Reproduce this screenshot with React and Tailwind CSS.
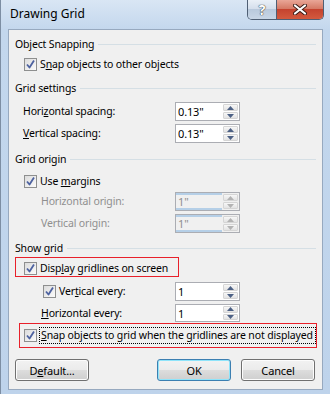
import React from 'react'

const font = "font-['Noto_Sans',sans-serif]"

function Check({ checked = true }) {
  return (
    <span className="flex h-[13px] w-[13px] shrink-0 items-center justify-center border border-[#8e8f8f] bg-gradient-to-br from-[#dcdcdc] to-[#fbfbfb]">
      {checked && (
        <svg width="11" height="11" viewBox="0 0 11 11">
          <path d="M2 5.5 L4.5 8.5 L9 1.5" fill="none" stroke="#4d62a0" strokeWidth="1.8" strokeLinejoin="round" />
        </svg>
      )}
    </span>
  )
}

function Header({ label }) {
  return (
    <div className="flex h-[16px] items-center pl-[6px] pr-[6px]">
      <span className="text-black">{label}</span>
      <span className="ml-[4px] h-px flex-1 bg-[#d5dfe5]" />
    </div>
  )
}

function Arrow({ up, disabled }) {
  const c = disabled ? '#b3b3b3' : '#4d6185'
  return (
    <svg width="7" height="4" viewBox="0 0 7 4">
      <path d={up ? 'M0 4 L3.5 0 L7 4 Z' : 'M0 0 L3.5 4 L7 0 Z'} fill={c} />
    </svg>
  )
}

function Spin({ value, disabled, h = 'h-[19px]' }) {
  return (
    <div className={`flex ${h} w-[65px] border border-[#abadb3] ${disabled ? 'bg-[#f0f0f0]' : 'bg-white'}`}>
      <div
        className={`flex flex-1 items-center pl-[2px] text-[11px] ${
          disabled ? 'border-y-2 border-[#b5cfe7] text-[#8f8f8f]' : 'text-black'
        }`}
      >
        {value}
      </div>
      <div className="flex w-[17px] flex-col gap-px p-px">
        <div className="flex flex-1 items-center justify-center rounded-[1px] border border-[#d5d5d5] bg-gradient-to-b from-[#f7f7f7] to-[#e3e3e3]">
          <Arrow up disabled={disabled} />
        </div>
        <div className="flex flex-1 items-center justify-center rounded-[1px] border border-[#d5d5d5] bg-gradient-to-b from-[#f7f7f7] to-[#e3e3e3]">
          <Arrow disabled={disabled} />
        </div>
      </div>
    </div>
  )
}

function Btn({ children, primary }) {
  return (
    <button
      className={`flex h-[22px] w-[74px] items-center justify-center rounded-[3px] border bg-[linear-gradient(#f2f2f2,#ebebeb_50%,#dddddd_50%,#cfcfcf)] text-[11px] text-black ${
        primary ? 'border-[#3c7fb1] shadow-[inset_0_0_0_1px_#8fe4fa]' : 'border-[#707070] shadow-[inset_0_0_0_1px_#fcfcfc]'
      }`}
    >
      {children}
    </button>
  )
}

export default function App() {
  return (
    <div className={`${font} relative h-[394px] w-[330px] overflow-hidden whitespace-nowrap border-l border-[#7d8ea3] bg-[linear-gradient(#d9e6f4,#c3d7ed_30px,#bed3eb)] text-[10.5px] leading-none tracking-[-0.15px] text-black`}>
      {/* title bar */}
      <div className="flex h-[29px] items-start justify-between pr-[6px]">
        <div className="pl-[9px] pt-[8px] text-[12px] tracking-normal text-black">Drawing Grid</div>
        <div className="flex h-[20px] overflow-hidden rounded-b-[5px] border border-t-0 border-[#4f5f74]">
          <div className="flex w-[29px] items-center justify-center border-r border-[#4f5f74] bg-[linear-gradient(#eaf0f7,#d5dfec_45%,#b9c9dc_50%,#c8d6e6)]">
            <span className="text-[14px] font-bold text-white [text-shadow:0_0_1px_#222,0_0_1px_#222]">?</span>
          </div>
          <div className="flex w-[46px] items-center justify-center bg-[linear-gradient(#e9a697,#d57a66_45%,#c5432f_50%,#d35a3e)]">
            <svg width="14" height="11" viewBox="0 0 14 11">
              <path d="M2 1.5 L12 9.5 M12 1.5 L2 9.5" stroke="#3b1c16" strokeWidth="4" strokeLinecap="round" />
              <path d="M2 1.5 L12 9.5 M12 1.5 L2 9.5" stroke="#fff" strokeWidth="2.2" strokeLinecap="round" />
            </svg>
          </div>
        </div>
      </div>

      {/* client area */}
      <div className="ml-[7px] flex h-[361px] w-[315px] flex-col border border-[#97a9bf] bg-[#f0f0f0]">
        <div className="mt-[6px]">
          <Header label="Object Snapping" />
        </div>
        <div className="flex h-[24px] items-center pl-[15px]">
          <Check />
          <span className="ml-[3px]">
            S<u>n</u>ap objects to other objects
          </span>
        </div>
        <div className="flex h-[24px] items-center">
          <div className="w-full">
            <Header label="Grid settings" />
          </div>
        </div>
        <div className="mt-[2px] flex items-center justify-between pl-[14px] pr-[82px]">
          <span>
            Hori<u>z</u>ontal spacing:
          </span>
          <Spin value={'0.13"'} />
        </div>
        <div className="mt-[3px] flex items-center justify-between pl-[14px] pr-[82px]">
          <span>
            <u>V</u>ertical spacing:
          </span>
          <Spin value={'0.13"'} />
        </div>
        <div className="mt-[8px]">
          <Header label="Grid origin" />
        </div>
        <div className="mt-[8px] flex h-[13px] items-center pl-[15px]">
          <Check />
          <span className="ml-[3px]">
            Use <u>m</u>argins
          </span>
        </div>
        <div className="mt-[4px] flex items-center justify-between pl-[32px] pr-[82px] text-[#8f8f8f]">
          <span>Horizontal origin:</span>
          <Spin value={'1"'} disabled />
        </div>
        <div className="mt-[3px] flex items-center justify-between pl-[32px] pr-[82px] text-[#8f8f8f]">
          <span>Vertical origin:</span>
          <Spin value={'1"'} disabled />
        </div>
        <div className="mt-[7px]">
          <Header label="Show grid" />
        </div>
        <div className="ml-[6px] mt-[1px] flex h-[20px] w-[164px] items-start border border-[#e8202a] pl-[8px] pt-[4px]">
          <Check />
          <span className="ml-[3px] leading-[13px]">
            Disp<u>l</u>ay gridlines on screen
          </span>
        </div>
        <div className="mt-[5px] flex items-center justify-between pl-[34px] pr-[82px]">
          <div className="flex items-center">
            <Check />
            <span className="ml-[3px]">
              Ver<u>t</u>ical every:
            </span>
          </div>
          <Spin value="1" />
        </div>
        <div className="mt-[3px] flex items-center justify-between pl-[32px] pr-[82px]">
          <span>
            <u>H</u>orizontal every:
          </span>
          <Spin value="1" h="h-[18px]" />
        </div>
        <div className="ml-[10px] mt-px flex h-[25px] w-[298px] items-center border border-[#e8202a] pl-[4px]">
          <Check />
          <span className="ml-[2px] flex h-[17px] flex-1 items-center border border-dotted border-black pl-px">
            <span>
              <u>S</u>nap objects to grid when the gridlines are not displayed
            </span>
          </span>
        </div>
        <div className="mt-[11px] flex items-center pl-[6px] pr-[7px]">
          <Btn>
            D<u>e</u>fault...
          </Btn>
          <div className="flex-1" />
          <Btn primary>OK</Btn>
          <div className="w-[10px]" />
          <Btn>Cancel</Btn>
        </div>
      </div>
    </div>
  )
}
